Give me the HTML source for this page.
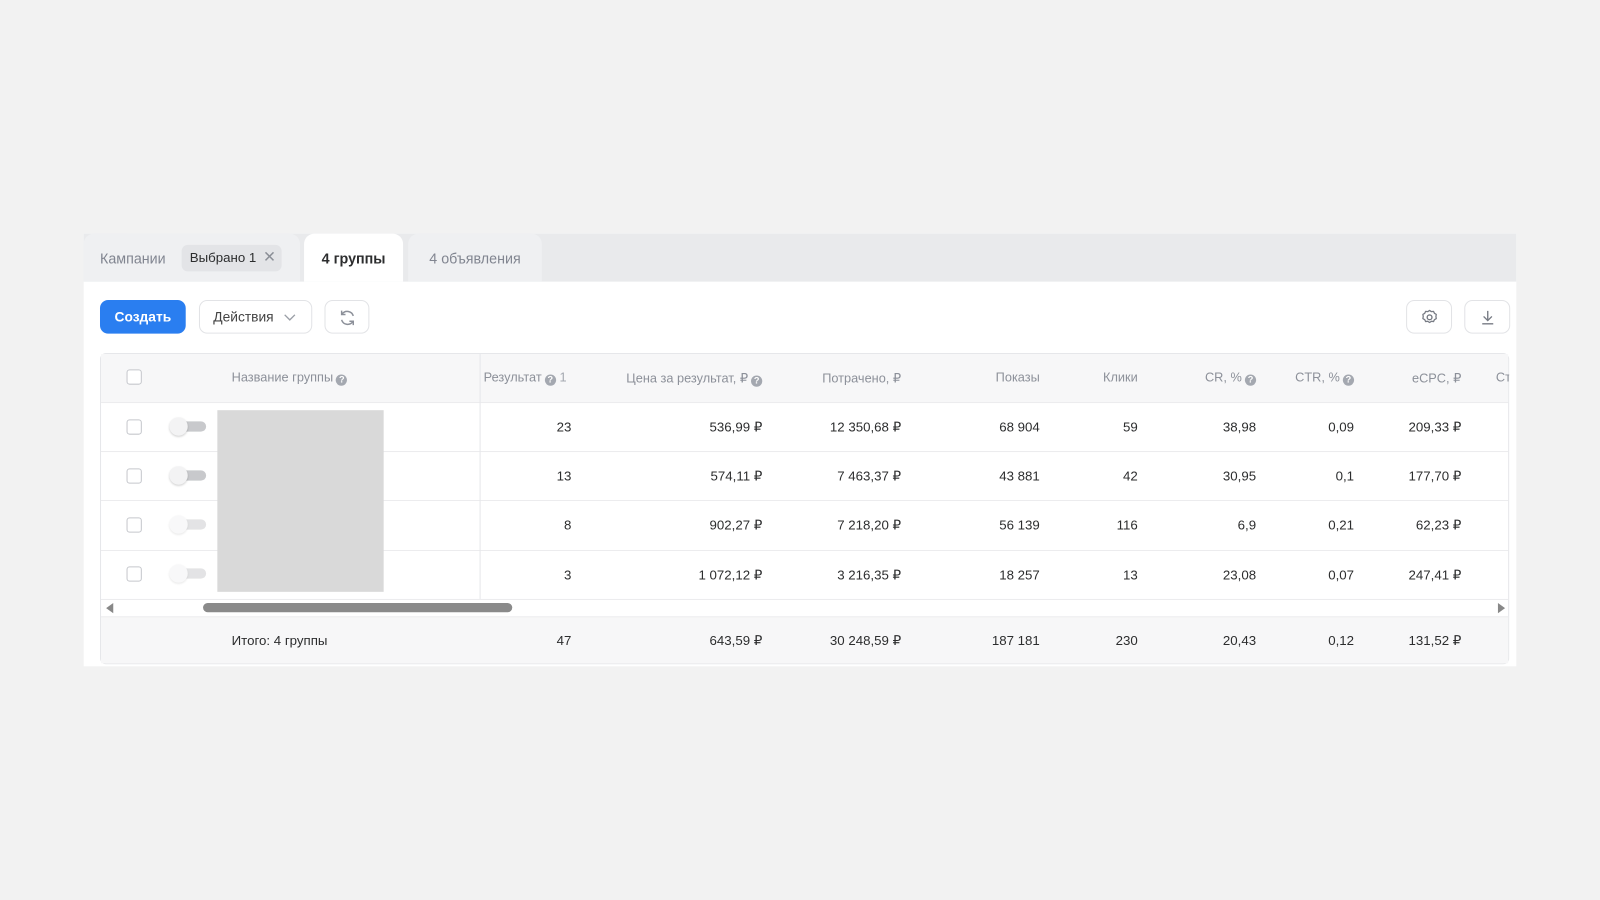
<!DOCTYPE html>
<html><head><meta charset="utf-8"><style>
*{margin:0;padding:0;box-sizing:border-box}
body{width:1600px;height:900px;background:#f2f2f2;font-family:"Liberation Sans",sans-serif;position:relative;overflow:hidden;color:#2c2d2e}
#w{position:absolute;left:0;top:0;width:1568px;height:882px;transform:scale(1.0204);transform-origin:0 0}
.a{position:absolute}
.panel{left:82px;top:229px;width:1404px;height:424px;background:#fff}
.tabbar{left:82px;top:229px;width:1404px;height:47px;background:#e9eaec}
.tab{top:229px;height:47px;border-radius:10px 10px 0 0;font-size:14px;line-height:48px}
.btn{height:33px;border:1px solid #e2e3e6;border-radius:8px;background:#fff;top:294px}
.tbl{left:98px;top:346px;width:1381px;height:305px;border:1px solid #e6e7ea;border-radius:6px;overflow:hidden}
.h{font-size:12.5px;color:#8c9099;top:363px;white-space:nowrap}
.c{font-size:13px;color:#2c2d2e;white-space:nowrap;text-align:right}
.line{height:1px;background:#ececee;left:99px;width:1379px}
.cb{width:15px;height:15px;border:1.5px solid #c5c7cc;border-radius:3px;left:124px;background:#fff}
.tg{left:166px;width:36px;height:14px}
.tg i{position:absolute;right:0;top:2px;width:30px;height:10px;border-radius:5px;background:#c8c9cc}
.tg b{position:absolute;left:0;top:-2px;width:18px;height:18px;border-radius:50%;background:#f3f3f4;box-shadow:0 1px 2px rgba(0,0,0,.2)}
.q{display:inline-block;width:11px;height:11px;border-radius:50%;background:#a4a8b0;color:#fff;font-size:9px;line-height:11px;text-align:center;vertical-align:-1px;margin-left:3px;font-weight:bold}
</style></head><body><div id="w">
<div class="a panel"></div>
<div class="a tabbar"></div>
<div class="a tab" style="left:82px;width:212px;background:#eff0f2;padding-left:16px;color:#818590">Кампании</div>
<div class="a" style="left:178px;top:240px;width:98px;height:26px;border-radius:6px;background:#e3e4e7;font-size:13px;line-height:26px;padding-left:8px;color:#2c2d2e">Выбрано 1 <span style="color:#8a8e96;font-size:15px;margin-left:3px">✕</span></div>
<div class="a tab" style="left:298px;width:97px;background:#fff;text-align:center;color:#2c2d2e;font-weight:bold;font-size:14px">4 группы</div>
<div class="a tab" style="left:400px;width:131px;background:#eff0f2;text-align:center;color:#818590">4 объявления</div>

<div class="a" style="left:98px;top:294px;width:84px;height:33px;border-radius:8px;background:#2a7ef0;color:#fff;font-size:13.5px;font-weight:bold;text-align:center;line-height:33px">Создать</div>
<div class="a btn" style="left:195px;width:111px;font-size:13.5px;line-height:31px;padding-left:13px;color:#444">Действия <svg width="12" height="8" style="margin-left:6px" viewBox="0 0 12 8"><path d="M1 1.5l5 5 5-5" fill="none" stroke="#9a9ea6" stroke-width="1.3"/></svg></div>
<div class="a btn" style="left:318px;width:44px"><svg class="a" style="left:12px;top:7px" width="19" height="19" viewBox="0 0 20 20"><path d="M16 8a6.5 6.5 0 0 0-11.5-2M4 12a6.5 6.5 0 0 0 11.5 2" fill="none" stroke="#8c9099" stroke-width="1.5"/><path d="M4 2.5v4h4M16 17.5v-4h-4" fill="none" stroke="#8c9099" stroke-width="1.5"/></svg></div>
<div class="a btn" style="left:1378px;width:45px"><svg class="a" style="left:13px;top:7px" width="18" height="18" viewBox="0 0 20 20"><circle cx="10" cy="10" r="2.6" fill="none" stroke="#777b84" stroke-width="1.5"/><path d="M10 2.5l2 1.3 2.3-.3 1 2.1 2 1.2-.4 2.3.4 2.2-2 1.2-1 2.1-2.3-.3-2 1.3-2-1.3-2.3.3-1-2.1-2-1.2.4-2.2-.4-2.3 2-1.2 1-2.1 2.3.3z" fill="none" stroke="#777b84" stroke-width="1.4" stroke-linejoin="round"/></svg></div>
<div class="a btn" style="left:1435px;width:45px"><svg class="a" style="left:13px;top:7px" width="18" height="18" viewBox="0 0 20 20"><path d="M10 3v10M5.5 9l4.5 4.5L14.5 9M4 17h12" fill="none" stroke="#777b84" stroke-width="1.5"/></svg></div>

<div class="a tbl"></div>
<div class="a" style="left:99px;top:347px;width:1379px;height:47px;background:#f7f7f8"></div>
<div class="a" style="left:99px;top:604px;width:1379px;height:46px;background:#f7f7f8"></div>
<div class="a line" style="top:394px"></div>
<div class="a line" style="top:442px"></div>
<div class="a line" style="top:490px"></div>
<div class="a line" style="top:539px"></div>
<div class="a line" style="top:587px"></div>
<div class="a line" style="top:604px"></div>
<div class="a" style="left:470px;top:347px;width:1px;height:240px;background:#e6e7ea"></div>

<div class="a cb" style="top:362px"></div>
<div class="a h" style="left:227px">Название группы<span class="q">?</span></div>
<div class="a h" style="left:474px">Результат<span class="q">?</span> <span style="color:#a4a8b0">1</span></div>
<div class="a h" style="right:821px">Цена за результат, ₽<span class="q">?</span></div>
<div class="a h" style="right:685px">Потрачено, ₽</div>
<div class="a h" style="right:549px">Показы</div>
<div class="a h" style="right:453px">Клики</div>
<div class="a h" style="right:337px">CR, %<span class="q">?</span></div>
<div class="a h" style="right:241px">CTR, %<span class="q">?</span></div>
<div class="a h" style="right:136px">eCPC, ₽</div>
<div class="a h" style="left:1466px;width:13px;overflow:hidden">Ст</div>

<div class="a" style="left:213px;top:402px;width:163px;height:178px;background:#d9d9d9"></div>

<div class="a cb" style="top:411px"></div><div class="a tg" style="top:411px"><i></i><b></b></div>
<div class="a cb" style="top:459px"></div><div class="a tg" style="top:459px"><i></i><b></b></div>
<div class="a cb" style="top:507px"></div><div class="a tg" style="top:507px;opacity:.5"><i></i><b></b></div>
<div class="a cb" style="top:555px"></div><div class="a tg" style="top:555px;opacity:.5"><i></i><b></b></div>

<div id="rows"></div>
<script>
var rights=[560,747,883,1019,1115,1231,1327,1432];
var data=[[411,["23","536,99 ₽","12 350,68 ₽","68 904","59","38,98","0,09","209,33 ₽"]],
[459,["13","574,11 ₽","7 463,37 ₽","43 881","42","30,95","0,1","177,70 ₽"]],
[507,["8","902,27 ₽","7 218,20 ₽","56 139","116","6,9","0,21","62,23 ₽"]],
[556,["3","1 072,12 ₽","3 216,35 ₽","18 257","13","23,08","0,07","247,41 ₽"]],
[620,["47","643,59 ₽","30 248,59 ₽","187 181","230","20,43","0,12","131,52 ₽"]]];
var h="";
data.forEach(function(r){r[1].forEach(function(t,i){h+='<div class="a c" style="top:'+r[0]+'px;right:'+(1568-rights[i])+'px">'+t+'</div>';});});
document.getElementById("rows").innerHTML=h;
</script>
<div class="a c" style="left:227px;top:620px;text-align:left">Итого: 4 группы</div>

<div class="a" style="left:104px;top:591px;width:0;height:0;border-top:5px solid transparent;border-bottom:5px solid transparent;border-right:7px solid #888"></div>
<div class="a" style="left:1468px;top:591px;width:0;height:0;border-top:5px solid transparent;border-bottom:5px solid transparent;border-left:7px solid #888"></div>
<div class="a" style="left:199px;top:591px;width:303px;height:9px;border-radius:5px;background:#8a8a8a"></div>
</div></body></html>
